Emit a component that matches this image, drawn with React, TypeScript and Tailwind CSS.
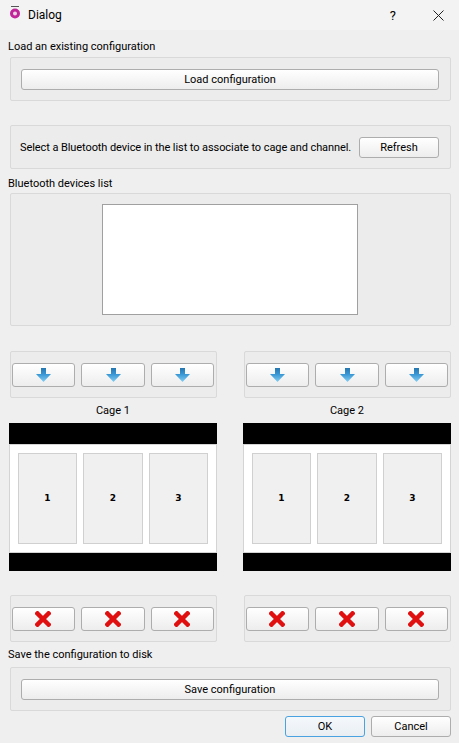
const font = "font-['Roboto',sans-serif]";

const ArrowIcon = ({ id }: { id: string }) => (
  <svg width="15" height="14" viewBox="0 0 15 14">
    <defs>
      <linearGradient id={id} x1="0" y1="0" x2="0" y2="1">
        <stop offset="0" stopColor="#2576b0" />
        <stop offset="0.45" stopColor="#3a97d4" />
        <stop offset="1" stopColor="#82cff4" />
      </linearGradient>
    </defs>
    <path d="M5 0h5v6h5l-7.5 8L0 6h5z" fill={`url(#${id})`} />
  </svg>
);

const CrossIcon = () => (
  <svg className="-ml-px" width="16" height="16" viewBox="0 0 16 16">
    <path d="M2.5 2.5l11 11M13.5 2.5l-11 11" stroke="#e01010" strokeWidth="4.5" strokeLinecap="square" fill="none" />
  </svg>
);

const Btn = ({ className, children, focus }: { className: string; children?: React.ReactNode; focus?: boolean }) => (
  <button
    className={`flex items-center justify-center rounded-[3px] border text-black ${
      focus ? "border-[#4aa3e0] bg-gradient-to-b from-[#f5f9fc] to-[#e9eef3]" : "border-[#adadad] bg-gradient-to-b from-white to-[#ededed]"
    } ${className}`}
  >
    {children}
  </button>
);

const Group = ({ className, children }: { className: string; children: React.ReactNode }) => (
  <div className={`rounded-[2px] border border-[#d9d9d9] bg-[#ececec] ${className}`}>{children}</div>
);

const ButtonRow = ({ name, cross }: { name: string; cross?: boolean }) => (
  <Group className="ml-px flex h-[47px] w-[207px] items-center gap-[6px] pl-px">
    {[0, 1, 2].map((i) => (
      <Btn key={i} className={`h-[24px] ${i === 1 ? "w-[64px]" : "w-[63px]"}`}>
        {cross ? <CrossIcon /> : <ArrowIcon id={`${name}-${i}`} />}
      </Btn>
    ))}
  </Group>
);

const Cage = ({ title }: { title: string }) => (
  <div className="w-[208px]">
    <div className="flex h-[25px] items-center justify-center">{title}</div>
    <div className="h-[21px] bg-black" />
    <div className="flex h-[109px] items-center gap-[6px] border border-[#d4d4d4] bg-white pl-[8px]">
      {["1", "2", "3"].map((n, i) => (
        <div
          key={n}
          className={`flex h-[91px] items-center justify-center border border-[#d0d0d0] bg-[#f0f0f0] font-['DejaVu_Sans',sans-serif] text-[9px] font-bold ${i === 1 ? "w-[60px]" : "w-[59px]"}`}
        >
          {n}
        </div>
      ))}
    </div>
    <div className="h-[18px] bg-black" />
  </div>
);

export default function App() {
  return (
    <div className={`flex h-[743px] w-[459px] flex-col overflow-hidden bg-[#efefef] text-[11px] leading-none text-black ${font}`}>
      <div className="flex h-[30px] shrink-0 items-center bg-[#f3f3f3]">
        <svg className="mb-[6px] ml-[9px]" width="12" height="14" viewBox="0 0 12 14">
          <path d="M2 1.5h8" stroke="#555" strokeWidth="1" />
          <circle cx="6" cy="8.5" r="3.5" fill="#e8d8e4" stroke="#c2249a" strokeWidth="3" />
        </svg>
        <span className="ml-[7px] text-[12px]">Dialog</span>
        <span className="ml-auto text-[13px]">?</span>
        <svg className="ml-[37px] mr-[15px]" width="11" height="11" viewBox="0 0 11 11">
          <path d="M0.5 0.5l10 10M10.5 0.5l-10 10" stroke="#222" strokeWidth="1" fill="none" />
        </svg>
      </div>

      <div className="flex h-[27px] shrink-0 items-center pl-[8px] pt-[5px]">Load an existing configuration</div>
      <Group className="ml-[10px] mr-[8px] flex h-[44px] shrink-0 items-center pl-[10px]">
        <Btn className="h-[21px] w-[418px]">Load configuration</Btn>
      </Group>

      <Group className="ml-[10px] mr-[8px] mt-[24px] flex h-[44px] shrink-0 items-center pl-[9px]">
        <span className="w-[339px] whitespace-nowrap tracking-[-0.08px]">Select a Bluetooth device in the list to associate to cage and channel.</span>
        <Btn className="h-[21px] w-[80px]">Refresh</Btn>
      </Group>

      <div className="flex h-[24px] shrink-0 items-center pl-[8px] pt-[4px]">Bluetooth devices list</div>
      <Group className="ml-[10px] mr-[8px] flex h-[133px] shrink-0 justify-center pr-px pt-[10px]">
        <div className="h-[111px] w-[256px] border border-[#a0a0a0] bg-white" />
      </Group>

      <div className="mt-[25px] flex shrink-0 justify-between pl-[9px] pr-[8px]">
        <ButtonRow name="a" />
        <ButtonRow name="b" />
      </div>

      <div className="flex shrink-0 justify-between pl-[9px] pr-[8px]">
        <Cage title="Cage 1" />
        <Cage title="Cage 2" />
      </div>

      <div className="mt-[24px] flex shrink-0 justify-between pl-[9px] pr-[8px]">
        <ButtonRow name="c" cross />
        <ButtonRow name="d" cross />
      </div>

      <div className="flex h-[25px] shrink-0 items-center pl-[8px]">Save the configuration to disk</div>
      <Group className="ml-[10px] mr-[8px] flex h-[44px] shrink-0 items-center pl-[10px]">
        <Btn className="h-[21px] w-[418px]">Save configuration</Btn>
      </Group>

      <div className="mt-[5px] flex shrink-0 justify-end gap-[6px] pr-[8px]">
        <Btn focus className="h-[21px] w-[80px]">OK</Btn>
        <Btn className="h-[21px] w-[80px]">Cancel</Btn>
      </div>
    </div>
  );
}
